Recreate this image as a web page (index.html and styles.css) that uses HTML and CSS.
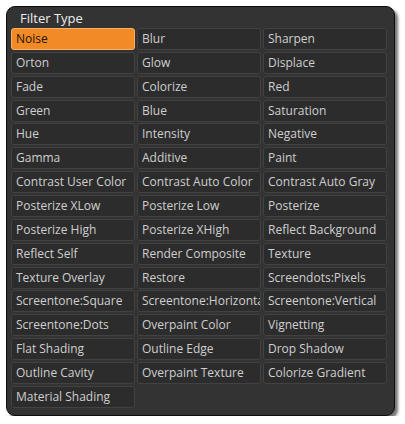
FILE: index.html
```html
<!DOCTYPE html>
<html lang="en">
<head>
    <meta charset="UTF-8">
    <title>Filter Type</title>
    <link rel="stylesheet" href="styles.css">
</head>
<body>
<div class="panel">
    <div class="title">Filter Type</div>
    <div class="grid">
        <div class="btn active">Noise</div>
        <div class="btn">Blur</div>
        <div class="btn">Sharpen</div>
        <div class="btn">Orton</div>
        <div class="btn">Glow</div>
        <div class="btn">Displace</div>
        <div class="btn">Fade</div>
        <div class="btn">Colorize</div>
        <div class="btn">Red</div>
        <div class="btn">Green</div>
        <div class="btn">Blue</div>
        <div class="btn">Saturation</div>
        <div class="btn">Hue</div>
        <div class="btn">Intensity</div>
        <div class="btn">Negative</div>
        <div class="btn">Gamma</div>
        <div class="btn">Additive</div>
        <div class="btn">Paint</div>
        <div class="btn">Contrast User Color</div>
        <div class="btn">Contrast Auto Color</div>
        <div class="btn">Contrast Auto Gray</div>
        <div class="btn">Posterize XLow</div>
        <div class="btn">Posterize Low</div>
        <div class="btn">Posterize</div>
        <div class="btn">Posterize High</div>
        <div class="btn">Posterize XHigh</div>
        <div class="btn">Reflect Background</div>
        <div class="btn">Reflect Self</div>
        <div class="btn">Render Composite</div>
        <div class="btn">Texture</div>
        <div class="btn">Texture Overlay</div>
        <div class="btn">Restore</div>
        <div class="btn">Screendots:Pixels</div>
        <div class="btn">Screentone:Square</div>
        <div class="btn">Screentone:Horizontal</div>
        <div class="btn">Screentone:Vertical</div>
        <div class="btn">Screentone:Dots</div>
        <div class="btn">Overpaint Color</div>
        <div class="btn">Vignetting</div>
        <div class="btn">Flat Shading</div>
        <div class="btn">Outline Edge</div>
        <div class="btn">Drop Shadow</div>
        <div class="btn">Outline Cavity</div>
        <div class="btn">Overpaint Texture</div>
        <div class="btn">Colorize Gradient</div>
        <div class="btn">Material Shading</div>
    </div>
</div>
</body>
</html>
```

FILE: styles.css
```css
body {
    margin: 0;
    background: #fff;
    font-family: "Open Sans", "Liberation Sans", sans-serif;
}

.panel {
    margin: 6px 0 0 6px;
    width: 387px;
    height: 408px;
    background: #333333;
    border: 1px solid #0d0d0d;
    border-radius: 9px;
    box-shadow: 3px 3px 3px rgba(0, 0, 0, 0.55);
}

.title {
    height: 21px;
    padding-left: 13px;
    font-size: 13px;
    line-height: 23px;
    color: #ececec;
}

.grid {
    display: grid;
    grid-template-columns: repeat(3, 124px);
    grid-auto-rows: 22px;
    column-gap: 2px;
    row-gap: 1.87px;
    padding-left: 4px;
}

.btn {
    box-sizing: border-box;
    border: 1px solid #424242;
    border-radius: 3px;
    background: #2c2c2c;
    color: #cfcfcf;
    font-size: 12px;
    line-height: 20px;
    padding-left: 4px;
    white-space: nowrap;
    overflow: hidden;
}

.active {
    background: #f28b25;
    border-color: #f7b06a;
    color: #1e1206;
}
```
